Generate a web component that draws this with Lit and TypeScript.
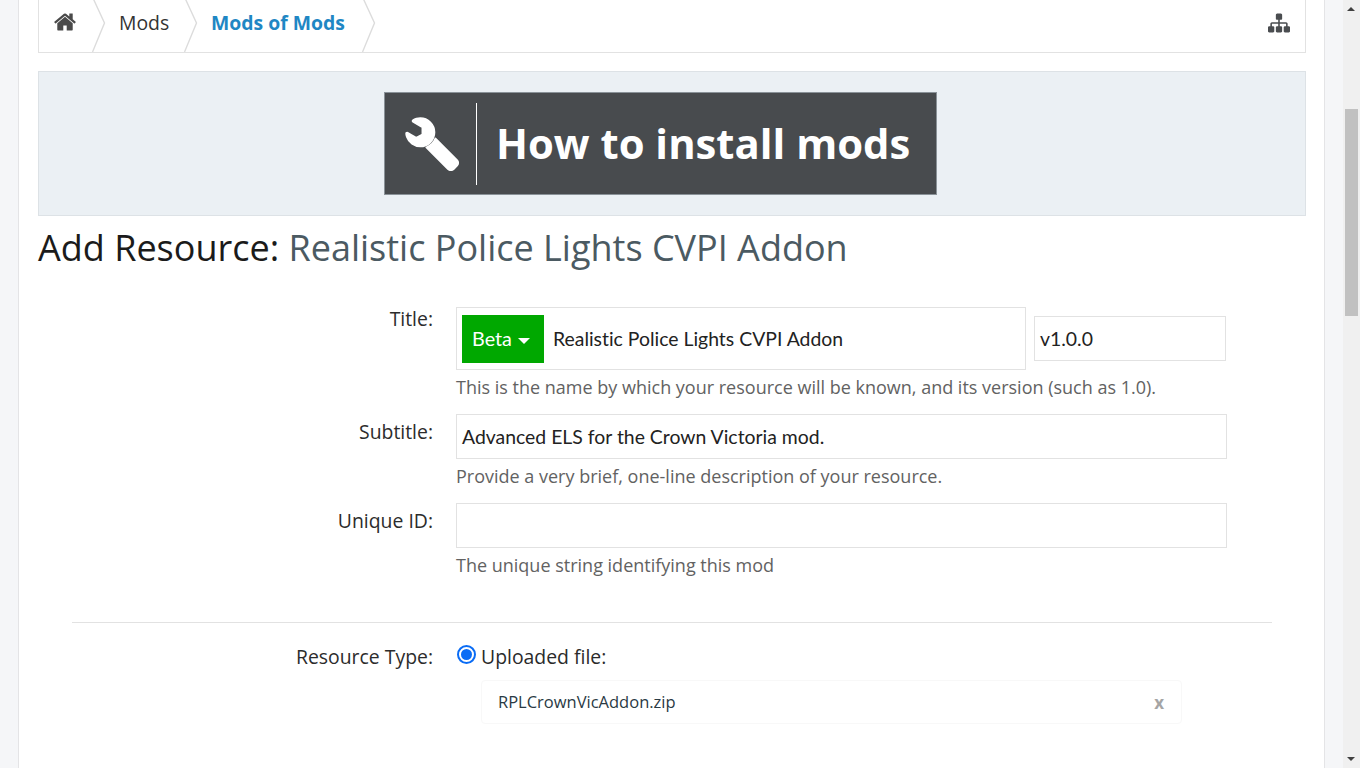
import { LitElement, html, css, svg } from "lit";
import { customElement } from "lit/decorators.js";

const home = svg`<path d="M1472 992v480q0 26-19 45t-45 19h-384v-384h-256v384h-384q-26 0-45-19t-19-45v-480q0-1 .5-3t.5-3l575-474 575 474q1 2 1 6zm223-69l-62 74q-8 9-21 11h-3q-13 0-21-7l-692-577-692 577q-12 8-24 7-13-2-21-11l-62-74q-8-10-7-23.5t11-21.5l719-599q32-26 76-26t76 26l244 204v-195q0-14 9-23t23-9h192q14 0 23 9t9 23v408l219 182q10 8 11 21.5t-7 23.5z"/>`;
const sitemap = svg`<path d="M1792 1248v320q0 40-28 68t-68 28h-320q-40 0-68-28t-28-68v-320q0-40 28-68t68-28h96v-192h-512v192h96q40 0 68 28t28 68v320q0 40-28 68t-68 28h-320q-40 0-68-28t-28-68v-320q0-40 28-68t68-28h96v-192h-512v192h96q40 0 68 28t28 68v320q0 40-28 68t-68 28h-320q-40 0-68-28t-28-68v-320q0-40 28-68t68-28h96v-192q0-52 38-90t90-38h512v-192h-96q-40 0-68-28t-28-68v-320q0-40 28-68t68-28h320q40 0 68 28t28 68v320q0 40-28 68t-68 28h-96v192h512q52 0 90 38t38 90v192h96q40 0 68 28t28 68z"/>`;
const wrench = svg`<path d="M1092 1052l-682 682q-37 37-90 37-52 0-91-37l-106-108q-38-36-38-90 0-53 38-91l681-681q39 98 114.5 173.5t173.5 114.5zm634-435q0 39-23 106-47 134-164.5 217.5t-258.5 83.5q-185 0-316.5-131.5t-131.5-316.5 131.5-316.5 316.5-131.5q58 0 121.5 16.5t107.5 46.5q16 11 16 28t-16 28l-293 169v224l193 107q5-3 79-48.5t135.5-81 70.5-35.5q15 0 23.5 10t8.5 25z"/>`;

@customElement("app-root")
export class AppRoot extends LitElement {
  static styles = css`
    :host { display: flex; height: 768px; width: 1360px; overflow: hidden; background: #f5f6f8; font-family: "Open Sans", sans-serif; color: #222; }
    .gutter { width: 18px; flex: none; }
    .main { width: 1307px; flex: none; box-sizing: border-box; height: 768px; overflow: hidden; background: #fff; border-left: 1px solid #e4e4e6; border-right: 1px solid #e4e4e6; padding: 0 18px 0 19px; }
    .gutter2 { width: 18px; flex: none; }
    .scrollbar { width: 17px; flex: none; background: #f0f0f0; position: relative; }
    .sb-arrow { width: 0; height: 0; border-left: 4px solid transparent; border-right: 4px solid transparent; position: absolute; left: 4px; }
    .sb-up { top: 7px; border-bottom: 4px solid #404040; }
    .sb-down { bottom: 7px; border-top: 4px solid #404040; }
    .sb-thumb { position: absolute; top: 109px; left: 2px; width: 13px; height: 207px; background: #c1c1c1; }

    .crumbs { height: 53px; box-sizing: border-box; border: 1px solid #e2e2e2; border-top: none; display: flex; align-items: center; justify-content: space-between; padding-right: 15px; }
    .crumb-list { display: flex; height: 52px; align-items: stretch; }
    .crumb { position: relative; display: flex; align-items: center; font-size: 19.4px; color: #333; padding-bottom: 8px; box-sizing: border-box; }
    .crumb-home { width: 54px; padding-left: 14px; }
    .crumb-mods { width: 92px; padding-left: 26px; }
    .crumb-cur { width: 178px; padding-left: 26px; font-weight: 700; color: #1f87c4; white-space: nowrap; }
    .chev { position: absolute; right: -13px; top: 0; width: 14px; height: 52px; fill: none; stroke: #dcdcdc; stroke-width: 1.4; }
    .home-ic { width: 24px; height: 24px; fill: #4a4a4a; margin-top: -1px; }
    .map-ic { width: 22px; height: 22px; fill: #4a4d50; margin-top: -7px; }

    .banner { margin-top: 18px; height: 145px; box-sizing: border-box; background: #ebf0f4; border: 1px solid #dde2e6; display: flex; align-items: center; justify-content: center; }
    .ad { width: 553px; height: 103px; box-sizing: border-box; background: #484b4e; border: 1px solid #8a9298; display: flex; align-items: center; color: #fff; margin-right: 23px; }
    .ad-ic { width: 57px; height: 57px; fill: #fff; stroke: #fff; stroke-width: 50; stroke-linejoin: round; margin: -3px 0 0 19px; transform: scaleX(-1); flex: none; }
    .ad-sep { width: 1px; height: 82px; background: #fff; margin-left: 15px; flex: none; }
    .ad-text { font-size: 41.8px; line-height: 50px; font-weight: 700; margin: -1px 0 0 19px; white-space: nowrap; font-family: "Open Sans", sans-serif; }

    h1 { margin: 9px 0 0; font-size: 36px; line-height: 46px; font-weight: 400; color: #1b1b1b; white-space: nowrap; }
    h1 span { color: #4b5a62; }

    .form { margin-top: 36px; }
    .row { display: grid; grid-template-columns: 395px 1fr; column-gap: 23px; }
    .label { text-align: right; font-size: 19.4px; line-height: 24px; color: #2c2c2c; }
    .r-sub .label { padding-top: 6px; }
    .r-id .label { padding-top: 6px; }
    .hint { font-size: 18px; line-height: 24px; color: #626262; margin-top: 5px; white-space: nowrap; }
    .title-line { display: flex; align-items: center; gap: 8px; }
    .box { border: 1px solid #e2e2e2; box-sizing: border-box; font-family: Lato, sans-serif; font-size: 19.4px; font-variant-ligatures: none; color: #222; display: flex; align-items: center; background: #fff; }
    .title-box { width: 570px; height: 63px; padding-left: 5px; }
    .prefix { width: 82px; height: 48px; background: #00a800; color: #fff; display: flex; align-items: center; padding: 0 0 2px 10px; box-sizing: border-box; gap: 6px; margin-right: 9px; flex: none; font-size: 19.8px; }
    .caret { width: 0; height: 0; border-left: 6.5px solid transparent; border-right: 6.5px solid transparent; border-top: 6px solid #fff; margin-top: 6px; }
    .ver-box { width: 192px; height: 45px; padding-left: 5px; }
    .wide-box { width: 771px; height: 45px; padding-left: 5px; }
    .r-sub { margin-top: 15px; }
    .r-id { margin-top: 15px; }
    .sep { height: 1px; background: #e2e2e2; margin: 45px 34px 0 34px; }
    .r-type { margin-top: 22px; }
    .radio-line { display: flex; align-items: center; gap: 5px; font-size: 19.4px; line-height: 24px; color: #2a2a2a; padding-left: 1px; }
    .radio { width: 19px; height: 19px; box-sizing: border-box; border: 2px solid #0a6cf5; border-radius: 50%; background: #fff; display: flex; align-items: center; justify-content: center; margin-top: -6px; }
    .radio i { width: 11px; height: 11px; border-radius: 50%; background: #0a6cf5; display: block; }
    .file { width: 701px; height: 44px; margin: 11px 0 0 25px; box-sizing: border-box; border: 1px solid #f8f8f8; border-radius: 4px; display: flex; align-items: center; justify-content: space-between; padding: 0 16px; font-size: 16.5px; color: #2a3a44; }
    .file-name { margin-top: -2px; }
    .x { font-weight: 700; color: #a5a5a5; font-size: 17px; margin-right: 1px; }
  `;

  render() {
    const chev = svg`<path d="M0.5 -3 L12.5 23 L0.5 52"/>`;
    return html`
      <div class="gutter"></div>
      <div class="main">
        <div class="crumbs">
          <div class="crumb-list">
            <div class="crumb crumb-home">
              <svg class="home-ic" viewBox="0 0 1792 1792">${home}</svg>
              <svg class="chev" viewBox="0 0 14 52">${chev}</svg>
            </div>
            <div class="crumb crumb-mods">Mods
              <svg class="chev" viewBox="0 0 14 52">${chev}</svg>
            </div>
            <div class="crumb crumb-cur">Mods of Mods
              <svg class="chev" viewBox="0 0 14 52">${chev}</svg>
            </div>
          </div>
          <svg class="map-ic" viewBox="0 0 1792 1792">${sitemap}</svg>
        </div>

        <div class="banner">
          <div class="ad">
            <svg class="ad-ic" viewBox="0 0 1792 1792">${wrench}</svg>
            <div class="ad-sep"></div>
            <div class="ad-text">How to install mods</div>
          </div>
        </div>

        <h1>Add Resource: <span>Realistic Police Lights CVPI Addon</span></h1>

        <div class="form">
          <div class="row">
            <div class="label">Title:</div>
            <div>
              <div class="title-line">
                <div class="box title-box">
                  <div class="prefix">Beta <span class="caret"></span></div>
                  Realistic Police Lights CVPI Addon
                </div>
                <div class="box ver-box">v1.0.0</div>
              </div>
              <div class="hint">This is the name by which your resource will be known, and its version (such as 1.0).</div>
            </div>
          </div>
          <div class="row r-sub">
            <div class="label">Subtitle:</div>
            <div>
              <div class="box wide-box">Advanced ELS for the Crown Victoria mod.</div>
              <div class="hint">Provide a very brief, one-line description of your resource.</div>
            </div>
          </div>
          <div class="row r-id">
            <div class="label">Unique ID:</div>
            <div>
              <div class="box wide-box"></div>
              <div class="hint">The unique string identifying this mod</div>
            </div>
          </div>
          <div class="sep"></div>
          <div class="row r-type">
            <div class="label">Resource Type:</div>
            <div>
              <div class="radio-line"><span class="radio"><i></i></span>Uploaded file:</div>
              <div class="file"><span class="file-name">RPLCrownVicAddon.zip</span><span class="x">x</span></div>
            </div>
          </div>
        </div>
      </div>
      <div class="gutter2"></div>
      <div class="scrollbar">
        <div class="sb-arrow sb-up"></div>
        <div class="sb-thumb"></div>
        <div class="sb-arrow sb-down"></div>
      </div>
    `;
  }
}
